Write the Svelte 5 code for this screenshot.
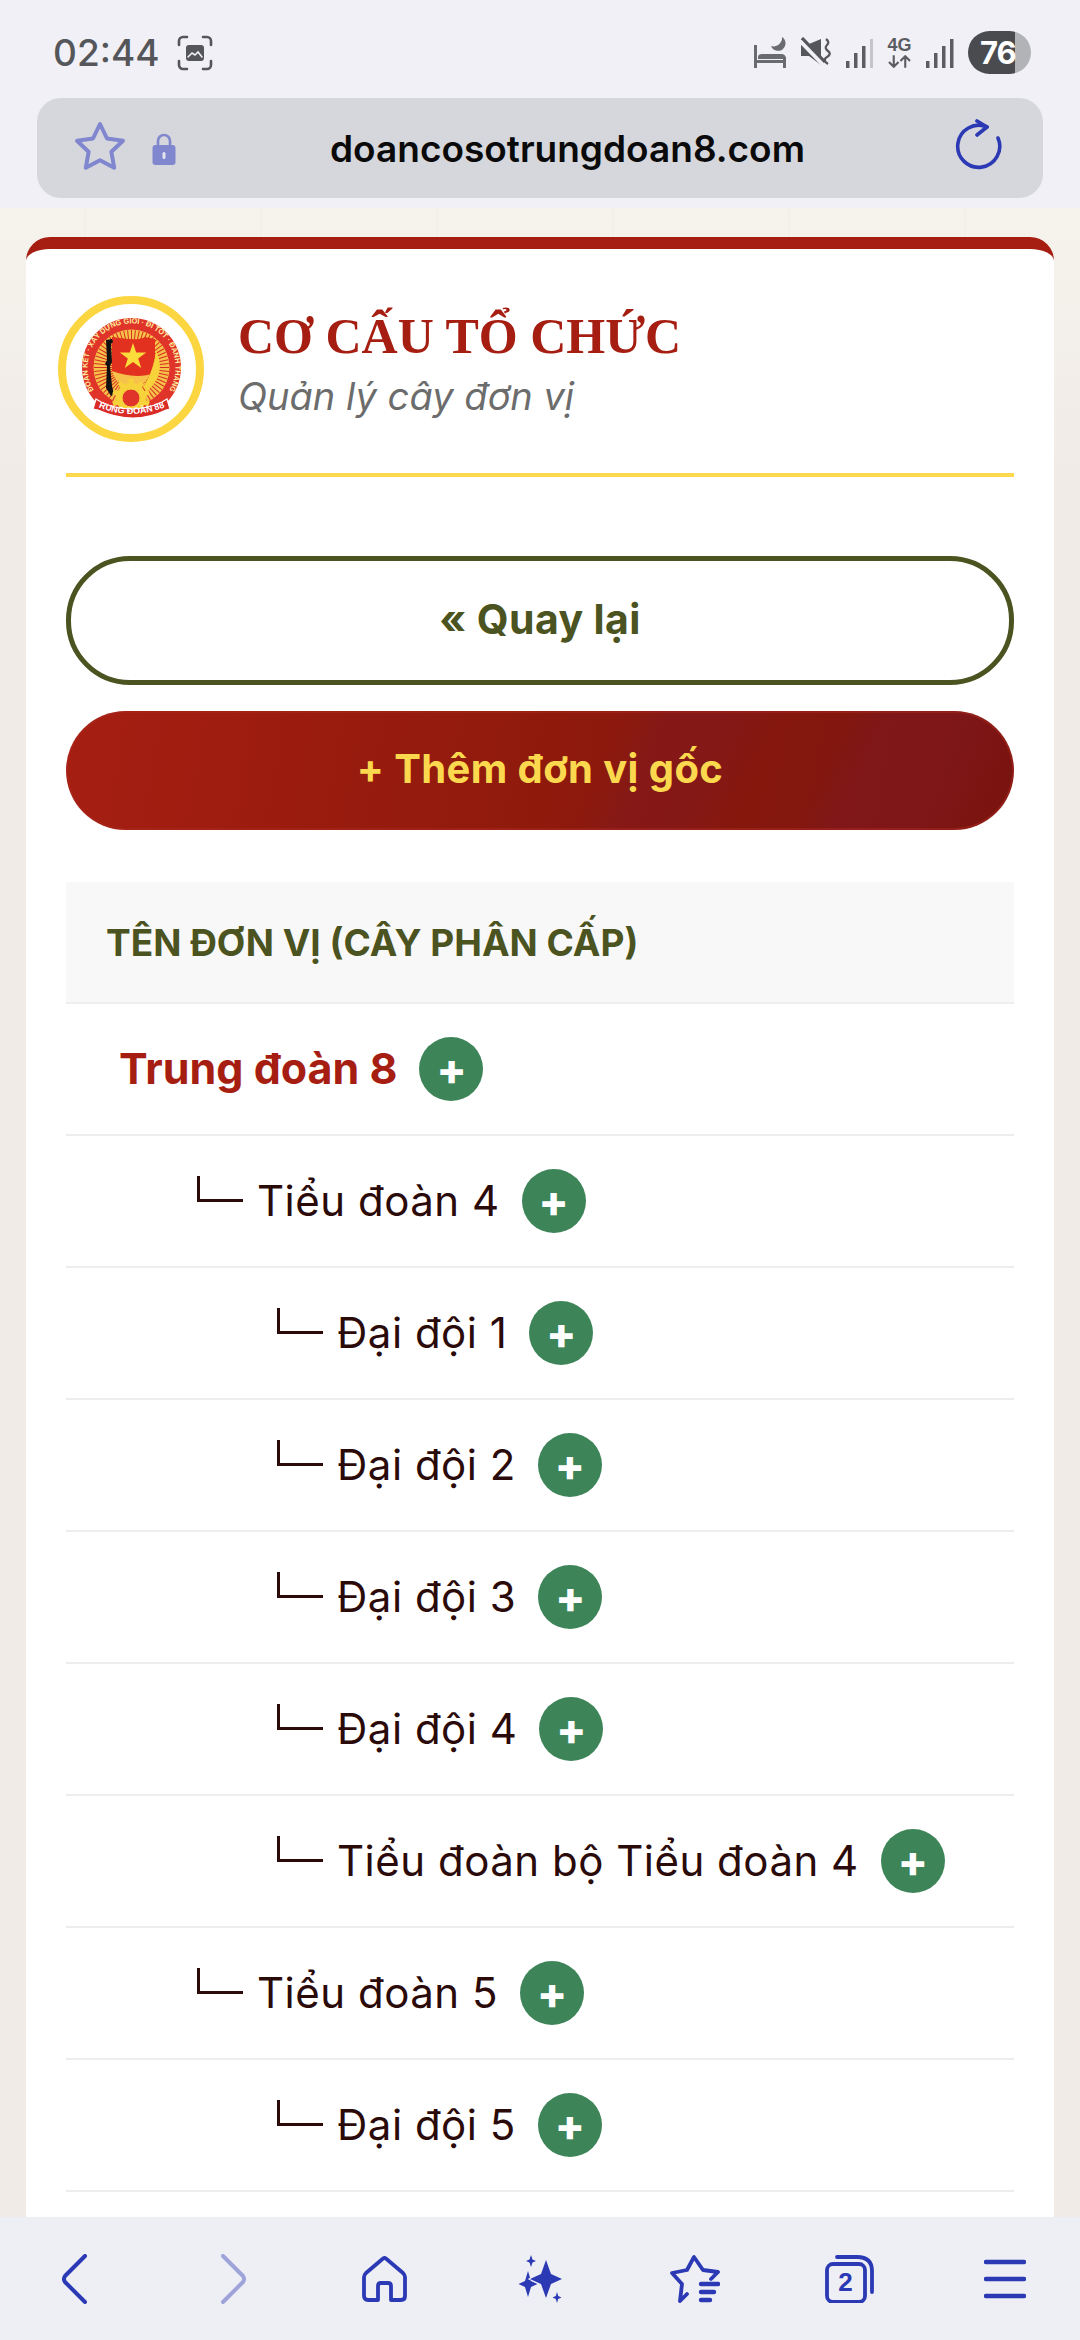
<script>
  const rows = [
    { name: 'Trung đoàn 8', level: 0 },
    { name: 'Tiểu đoàn 4', level: 1 },
    { name: 'Đại đội 1', level: 2 },
    { name: 'Đại đội 2', level: 2 },
    { name: 'Đại đội 3', level: 2 },
    { name: 'Đại đội 4', level: 2 },
    { name: 'Tiểu đoàn bộ Tiểu đoàn 4', level: 2 },
    { name: 'Tiểu đoàn 5', level: 1 },
    { name: 'Đại đội 5', level: 2 }
  ];
  const rays = Array.from({ length: 60 }, (_, i) => i * 6);
  const teeth = Array.from({ length: 10 }, (_, i) => i * 36);
</script>

<div class="screen">
  <div class="status">
    <div class="left">
      <span class="time">02:44</span>
      <svg width="36" height="36" viewBox="0 0 36 36" fill="none" stroke="#55565a" stroke-width="2.6" stroke-linecap="round">
        <path d="M2 10V6a4 4 0 0 1 4-4h4M26 2h4a4 4 0 0 1 4 4v4M34 26v4a4 4 0 0 1-4 4h-4M10 34H6a4 4 0 0 1-4-4v-4" />
        <rect x="9" y="10" width="18" height="16" rx="3" fill="#55565a" stroke="none" />
        <path d="M11 22l4-4 3 2 3-3 4 5" stroke="#f0f0f6" stroke-width="1.6" />
      </svg>
    </div>
    <div class="right">
      <svg width="34" height="32" viewBox="0 0 34 32" fill="#6a6b6f">
        <rect x="1" y="8" width="3" height="23" />
        <rect x="30" y="20" width="3" height="11" />
        <rect x="1" y="23" width="32" height="3" />
        <path d="M5 22v-2q0-3 4-3h19q5 0 5 5z" />
        <path d="M29 0a7.500 7.500 0 1 1-11 9a8.500 8.500 0 0 0 11-9z" />
      </svg>
      <svg width="30" height="32" viewBox="0 0 30 32" fill="none" stroke="#55565a">
        <path d="M0 7h8L20 2v26L8 19H0z" fill="#55565a" stroke="none" />
        <path d="M-1 3l25 26" stroke="#f0f0f6" stroke-width="5" />
        <path d="M1 1l23 24" stroke-width="3.200" />
        <path d="M25 2q4 3 1 6t1 6-1 6 1 7" stroke-width="2.200" />
      </svg>
      <svg width="29" height="30" viewBox="0 0 29 30">
        <rect x="1" y="23" width="3.500" height="7" fill="#5c5d61" />
        <rect x="9" y="15" width="3.500" height="15" fill="#5c5d61" />
        <rect x="17" y="8" width="3.500" height="22" fill="#5c5d61" />
        <rect x="25" y="1" width="3" height="29" fill="#c4c5c9" />
      </svg>
      <div class="net">
        <span>4G</span>
        <svg width="23" height="13" viewBox="0 0 24 13" fill="none" stroke="#5c5d61" stroke-width="2.200">
          <path d="M6 0v12M1 7l5 5 5-5M18 13V1M13 6l5-5 5 5" />
        </svg>
      </div>
      <svg width="29" height="30" viewBox="0 0 29 30" fill="#5c5d61">
        <rect x="1" y="23" width="3.500" height="7" />
        <rect x="9" y="15" width="3.500" height="15" />
        <rect x="17" y="8" width="3.500" height="22" />
        <rect x="25" y="1" width="3.500" height="29" />
      </svg>
      <div class="battery"><span>76</span></div>
    </div>
  </div>

  <div class="urlbar">
    <svg class="star" width="52" height="52" viewBox="0 0 52 52" fill="none" stroke="#8087cf" stroke-width="4" stroke-linejoin="round">
      <path d="M26 3l7 14.500 16 2.300-11.600 11 2.800 16L26 39.300 11.800 46.800l2.800-16L3 19.800l16-2.300z" />
    </svg>
    <svg class="lock" width="24" height="34" viewBox="0 0 24 34">
      <path d="M6 14V9a6 6 0 0 1 12 0v5" fill="none" stroke="#8087cf" stroke-width="2.600" />
      <rect x="0.500" y="13" width="23" height="20" rx="3" fill="#8087cf" />
      <rect x="10.500" y="20" width="3" height="7" rx="1.500" fill="#e4e5ec" />
    </svg>
    <span class="domain">doancosotrungdoan8.com</span>
    <svg class="reload" width="48" height="54" viewBox="0 0 48 54" fill="none" stroke="#2b39b5" stroke-width="3.600" stroke-linecap="round" stroke-linejoin="round">
      <path d="M32 8A21 21 0 1 0 43 19" />
      <path d="M22 2l10 6-10 8" />
    </svg>
  </div>

  <main class="page">
    <section class="card">
      <header class="head">
        <svg class="logo" width="146" height="146" viewBox="0 0 146 146">
          <defs>
            <path id="arc-top" d="M40.500 100.500A44 44 0 1 1 106.500 100.500" />
            <path id="arc-band" d="M40 111q33 14 67 0" />
          </defs>
          <circle cx="73" cy="73" r="69" fill="#fff" stroke="#fbd640" stroke-width="8" />
          <circle cx="73.500" cy="71.500" r="49.500" fill="#e0342a" />
          <circle cx="73.500" cy="71.500" r="38" fill="#f6c24b" />
          {#each rays as a}
            <line x1="73.500" y1="34" x2="73.500" y2="52" stroke="#d8301f" stroke-width="1" transform="rotate({a} 73.500 71.500)" />
          {/each}
          <path d="M54 41c14 2 26 4 33 0l10 2v34c-14 5-30 3-43-2z" fill="#e2311f" />
          <path d="M75 47l3.200 9.500h10l-8 6 3 9.500-8.200-6-8.200 6 3-9.500-8-6h10z" fill="#fbdc3b" />
          <path d="M48 44l6-1 1 3-2 2 1 18-2 4 2 20 2 8-3 2-5-8 1-22-2-2 2-4z" fill="#111" />
          <path d="M98 55c7 14 5 28-9 40l-4-4c7-10 11-22 13-36z" fill="#f7d23a" />
          {#each teeth as a}
            <rect x="70.500" y="83" width="5" height="6" fill="#f7d23a" transform="rotate({a} 73 102)" />
          {/each}
          <circle cx="73" cy="102" r="15" fill="#f7d23a" />
          <circle cx="73" cy="102" r="9" fill="#e0342a" stroke="#f7d23a" stroke-width="1" />
          <text class="arc-text"><textPath href="#arc-top" startOffset="50%" text-anchor="middle" textLength="186" lengthAdjust="spacingAndGlyphs">ĐOÀN KẾT · XÂY DỰNG GIỎI · ĐI TỐT · ĐÁNH THẮNG</textPath></text>
          <path d="M38 103l5 3q30 14 61 0l5-3 3 10-4 1q-32 16-68 0l-5-1z" fill="#d92a26" stroke="#fff" stroke-width="1.200" />
          <text class="band-text"><textPath href="#arc-band" startOffset="50%" text-anchor="middle">TRUNG ĐOÀN 888</textPath></text>
        </svg>
        <div class="titles">
          <h1>CƠ CẤU TỔ CHỨC</h1>
          <p>Quản lý cây đơn vị</p>
        </div>
      </header>

      <div class="content">
        <button class="btn back"><span>« Quay lại</span></button>
        <button class="btn add"><span>+ Thêm đơn vị gốc</span></button>

        <div class="table">
          <div class="thead">TÊN ĐƠN VỊ (CÂY PHÂN CẤP)</div>
          {#each rows as r}
            <div class="row lv{r.level}">
              {#if r.level > 0}<span class="branch"></span>{/if}
              <span class="name">{r.name}</span>
              <span class="plus">+</span>
            </div>
          {/each}
        </div>
      </div>
    </section>
  </main>

  <nav class="nav">
    <svg width="25" height="50" viewBox="0 0 25 50" fill="none" stroke="#2b39b5" stroke-width="4" stroke-linecap="round" stroke-linejoin="round"><path d="M23 2L3 22q-2 3 0 6l20 20" /></svg>
    <svg class="fwd" width="25" height="50" viewBox="0 0 25 50" fill="none" stroke="#9ea4da" stroke-width="4" stroke-linecap="round" stroke-linejoin="round"><path d="M2 2l20 20q2 3 0 6L2 48" /></svg>
    <svg width="45" height="46" viewBox="0 0 45 46" fill="none" stroke="#2b39b5" stroke-width="3.800" stroke-linecap="round" stroke-linejoin="round"><path d="M20.500 3q2-2 4 0L41 17q2 2 2 4v19q0 4-4 4H29V30q0-3-3-3h-7q-3 0-3 3v14H6q-4 0-4-4V21q0-2 2-4z" /></svg>
    <svg width="44" height="48" viewBox="0 0 44 48" fill="#2b39b5">
      <path d="M10 16l3 10 6.500 3-6.500 3-3 10-3-10-6.500-3 6.500-3z" />
      <path d="M28 5l5 14 11 5-11 5-5 14-5-14-11-5 11-5z" stroke="#eeeef5" stroke-width="2" paint-order="stroke" />
      <path d="M13 0l1.500 4.500L18 6l-3.500 1.500L13 12l-1.500-4.500L8 6l3.500-1.500z" />
      <path d="M39 37l1.200 4 3.300 1.500-3.300 1.500-1.200 4-1.200-4-3.300-1.500 3.300-1.500z" />
    </svg>
    <svg width="51" height="48" viewBox="0 0 51 48" fill="none" stroke="#2b39b5" stroke-width="3.800" stroke-linecap="round" stroke-linejoin="round"><path d="M42 24l7-7-15-2-9-13-7 13-15 3 10 11-2 17 7-7" /><path d="M32 29h17M32 37h13M32 45h9" stroke-width="4.400" /></svg>
    <div class="tabs">
      <svg width="50" height="48" viewBox="0 0 50 48" fill="none" stroke="#2b39b5" stroke-width="3.800" stroke-linecap="round"><rect x="2" y="9" width="38" height="38" rx="6" /><path d="M12 2h20q15 0 15 14v21" /></svg>
      <span>2</span>
    </div>
    <svg width="42" height="40" viewBox="0 0 42 40" fill="none" stroke="#2b39b5" stroke-width="4.600" stroke-linecap="round"><path d="M2 3h38M2 20h38M2 37h38" /></svg>
  </nav>
</div>

<style>
  :global(body) { margin: 0; background: #f0f0f6; }
  .screen {
    width: 1080px; height: 2340px; display: flex; flex-direction: column;
    overflow: hidden; background: #f0f0f6; font-family: Inter, "Noto Sans", sans-serif;
  }
  .status {
    height: 98px; flex: none; display: flex; justify-content: space-between;
    align-items: flex-start; padding: 29px 49px 0 53px; box-sizing: border-box;
  }
  .left { display: flex; align-items: center; gap: 18px; padding-top: 1px; }
  .time { font-size: 37px; line-height: 46px; font-weight: 500; color: #55565a; }
  .right { display: flex; align-items: center; gap: 14px; margin-top: 2px; }
  .net { display: flex; flex-direction: column; align-items: center; width: 23px; gap: 1px; }
  .net span { font: 700 18px/17px "Liberation Sans", sans-serif; color: #5c5d61; }
  .battery {
    width: 63px; height: 43px; border-radius: 22px; overflow: hidden; display: flex;
    align-items: center; padding-left: 12px; box-sizing: border-box;
    background: linear-gradient(90deg, #4a4b4f 0 74%, #b2b3b6 74% 100%);
  }
  .battery span { font: 700 31px/43px Inter, sans-serif; color: #fff; letter-spacing: -1px; }

  .urlbar {
    height: 100px; flex: none; margin: 0 37px; border-radius: 24px; background: #d6d7dc;
    display: flex; align-items: center; padding: 0 40px 0 37px; box-sizing: border-box;
  }
  .star { flex: none; margin-top: -3px; }
  .lock { flex: none; margin-left: 26px; margin-top: 1px; }
  .domain { flex: 1; text-align: center; font-size: 37px; font-weight: 600; color: #0a0a0a; padding-left: 4px; }
  .reload { flex: none; margin-top: -4px; }

  .page {
    flex: 1; min-height: 0; margin-top: 10px; padding: 29px 26px 0; overflow: hidden;
    display: flex; flex-direction: column;
    background-color: #f2eee9;
    background-image:
      linear-gradient(90deg, rgba(120, 100, 70, 0.02) 2px, transparent 2px),
      linear-gradient(180deg, #f6f3ec, #f0ebe7 260px);
    background-size: 176px 176px, 100% 100%;
    background-position: 84px 0, 0 0;
  }
  .card {
    flex: 1; background: #fff; border-top: 12px solid #a61e12; border-radius: 24px 24px 0 0;
    padding: 32px 40px 0;
  }
  .head { display: flex; align-items: flex-start; gap: 34px; height: 196px; box-sizing: border-box; position: relative; }
  .head::after { content: ""; position: absolute; left: 0; right: 0; bottom: 0; height: 4px; background: #fbd84e; }
  .logo { flex: none; margin-left: -8px; margin-top: 15px; }
  .titles { padding-top: 25px; }
  h1 { margin: 0; font: 700 50px/60px "Liberation Serif", serif; color: #a61e12; white-space: nowrap; }
  .titles p { margin: 5px 0 0; font-size: 38px; line-height: 50px; font-style: italic; color: #6c6c6c; white-space: nowrap; }

  .content { padding-top: 79px; }
  .btn {
    display: block; width: 100%; font-family: Inter, sans-serif; font-weight: 700;
    border-radius: 64px; box-sizing: border-box; cursor: pointer;
  }
  .btn span { display: block; margin-top: -4px; }
  .back { height: 129px; background: #fff; border: 5px solid #4b5320; color: #4b5320; font-size: 41px; letter-spacing: 0.4px; }
  .add {
    height: 119px; margin-top: 26px; border: 0; color: #fbd84e; font-size: 40px; letter-spacing: 0.4px;
    box-shadow: inset 0 0 0 2px rgba(170, 40, 30, 0.5);
    background:
      linear-gradient(115deg, transparent 56%, rgba(125, 25, 40, 0.35) 60% 66%, transparent 72% 78%, rgba(125, 25, 40, 0.35) 82% 90%, transparent 96%),
      linear-gradient(100deg, #a61e12 0%, #8f1a0c 50%, #7a1410 100%);
  }
  .table { margin-top: 52px; }
  .thead {
    height: 122px; display: flex; align-items: center; padding-left: 40px; background: #f8f8f8;
    border-bottom: 2px solid #eeeeee; box-sizing: border-box; font-size: 37px; font-weight: 700; color: #4b5320;
  }
  .row {
    height: 132px; box-sizing: border-box; border-bottom: 2px solid #eeeeee;
    display: flex; align-items: center; font-size: 42px; letter-spacing: 0.5px; color: #2b0a0a;
  }
  .row .name { margin-top: -2px; }
  .lv0 { padding-left: 53px; }
  .lv0 .name { font-weight: 700; color: #a61e12; font-size: 43px; letter-spacing: 0; }
  .lv1 { padding-left: 131px; }
  .lv2 { padding-left: 211px; }
  .branch { width: 46px; height: 26px; flex: none; box-sizing: border-box; border-left: 3px solid #2b0a0a; border-bottom: 3px solid #2b0a0a; margin: -24px 14px 0 0; }
  .plus {
    width: 64px; height: 64px; border-radius: 50%; background: #3d8559; color: #fff; flex: none;
    margin-left: 22px; display: flex; align-items: center; justify-content: center;
    font-size: 44px; font-weight: 800; line-height: 1; letter-spacing: 0;
  }

  .nav {
    height: 123px; flex: none; background: #eeeef5; display: grid;
    grid-template-columns: repeat(7, 155px); align-items: center; justify-items: center;
    box-sizing: border-box; margin-left: -3px; width: 1083px;
  }
  .fwd { margin-left: 8px; }
  .tabs { position: relative; width: 50px; height: 48px; }
  .tabs svg { display: block; }
  .tabs span { position: absolute; left: 2px; width: 38px; top: 12px; text-align: center; font: 700 26px/30px "Liberation Sans", sans-serif; color: #2b39b5; }
  .arc-text { font: 700 7.500px "Liberation Sans", sans-serif; fill: #fff0a0; }
  .band-text { font: 700 9px "Liberation Sans", sans-serif; fill: #fff; }
</style>
